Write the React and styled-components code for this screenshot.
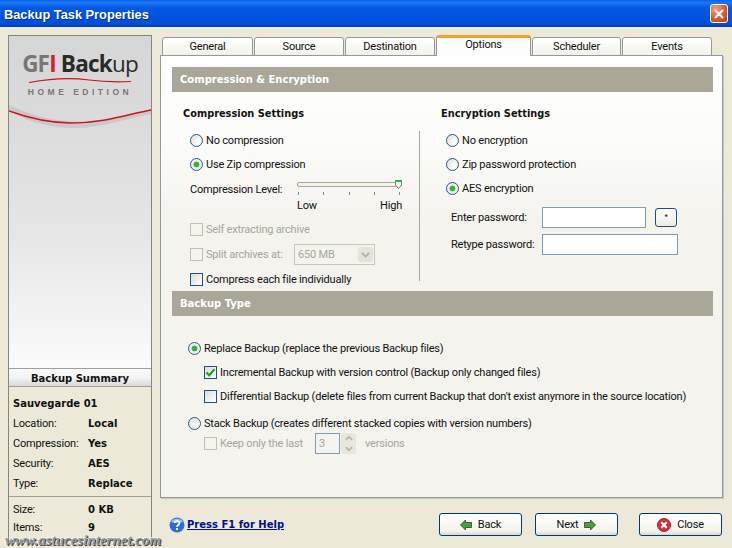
import React from "react";
import styled, { createGlobalStyle } from "styled-components";

const Global = createGlobalStyle`
  html, body { margin: 0; padding: 0; background: #ece9d8; }
  * { box-sizing: border-box; }
`;

const Win = styled.div`
  position: relative;
  width: 732px;
  height: 548px;
  overflow: hidden;
  background: #ece9d8;
  font-family: "Roboto", "Liberation Sans", sans-serif;
  font-size: 11px;
  letter-spacing: -0.2px;
  color: #111;
  display: flex;
  flex-direction: column;
`;
const TitleBar = styled.div`
  height: 27px;
  flex: none;
  display: flex;
  align-items: center;
  justify-content: space-between;
  padding: 0 4px 0 4px;
  background: linear-gradient(180deg, #0a5fe8 0%, #1a78f6 10%, #0558e2 28%, #0054e3 60%, #0050d8 85%, #0040b8 100%);
`;
const TitleText = styled.div`
  font-family: "Liberation Sans", sans-serif;
  font-weight: 700;
  font-size: 12.8px;
  letter-spacing: 0;
  padding-top: 2px;
  color: #fff;
  text-shadow: 1px 1px 0 #0a2e8a;
`;
const CloseX = styled.div`
  width: 18px;
  height: 19px;
  border: 1px solid #fff;
  border-radius: 3px;
  background: radial-gradient(circle at 30% 25%, #f0a080, #dc5a30 55%, #c03a18);
  display: flex;
  align-items: center;
  justify-content: center;
`;
const Main = styled.div`
  flex: 1;
  min-height: 0;
  display: flex;
  padding: 8px 9px 0 8px;
  gap: 8px;
`;
const Side = styled.div`
  width: 144px;
  flex: none;
  height: 506px;
  border: 1px solid #85857d;
  display: flex;
  flex-direction: column;
`;
const LogoArea = styled.div`
  height: 332px;
  flex: none;
  position: relative;
  background: linear-gradient(180deg, #d6d6d6 0%, #dcdcdc 30%, #e6e6e6 60%, #fbfbfb 100%);
  display: flex;
  flex-direction: column;
  align-items: center;
`;
const LogoName = styled.div`
  margin-top: 13px;
  font-family: "Open Sans", "Noto Sans", sans-serif;
  font-weight: 700;
  font-size: 22.5px;
  line-height: 29px;
  letter-spacing: -0.8px;
  color: #2a2a2a;
  white-space: nowrap;
`;
const LogoGray = styled.span`
  color: #777;
`;
const LogoRed = styled.span`
  color: #d8202a;
`;
const LogoLight = styled.span`
  font-weight: 400;
`;
const Swoosh = styled.svg`
  display: block;
  flex: none;
`;
const LogoSub = styled.div`
  font-family: "Liberation Sans", sans-serif;
  font-size: 8.5px;
  font-weight: 700;
  letter-spacing: 3.5px;
  color: #777;
  margin-top: 3px;
  margin-bottom: 7px;
  line-height: 12px;
`;
const SumHead = styled.div`
  height: 19px;
  flex: none;
  padding-top: 1px;
  border-top: 1px solid #a0a098;
  border-bottom: 1px solid #a0a098;
  background: linear-gradient(180deg, #fafafa 0%, #f4f4f4 50%, #d8d8d8 100%);
  display: flex;
  align-items: center;
  justify-content: center;
  font-family: "DejaVu Sans", sans-serif;
  font-size: 10px;
  letter-spacing: 0;
  font-weight: 700;
`;
const SumName = styled.div`
  height: 19px;
  margin-top: 7px;
  padding-left: 4px;
  line-height: 20px;
  font-family: "DejaVu Sans", sans-serif;
  font-weight: 700;
  font-size: 10px;
  letter-spacing: 0;
`;
const SumRow = styled.div`
  height: ${p => p.$h || 20}px;
  display: flex;
  align-items: center;
  padding-left: 4px;
`;
const SumKey = styled.span`
  width: 75px;
  flex: none;
`;
const SumVal = styled.span`
  font-family: "DejaVu Sans", sans-serif;
  font-weight: 700;
  font-size: 10px;
  letter-spacing: 0;
`;
const SumRule = styled.div`
  height: 1px;
  background: #a0a098;
  margin: 3px 0 3px;
`;
const Right = styled.div`
  flex: 1;
  min-width: 0;
  display: flex;
  flex-direction: column;
`;
const Tabs = styled.div`
  height: 21px;
  flex: none;
  display: flex;
  align-items: flex-end;
  padding-left: 2px;
  gap: 1px;
  margin-bottom: -1px;
  position: relative;
  z-index: 1;
`;
const Tab = styled.div`
  width: ${p => p.$w}px;
  height: ${p => (p.$active ? 21 : 19)}px;
  border: 1px solid #919b9c;
  border-bottom: ${p => (p.$active ? "none" : "1px solid #919b9c")};
  border-radius: 3px 3px 0 0;
  border-top: ${p => (p.$active ? "3px solid #f2a32c" : "1px solid #919b9c")};
  background: ${p => (p.$active ? "#fdfdfb" : "linear-gradient(180deg,#fff,#f3f2ea)")};
  display: flex;
  align-items: center;
  justify-content: center;
  padding-bottom: ${p => (p.$active ? 5 : 0)}px;
`;
const Panel = styled.div`
  height: 443px;
  flex: none;
  border: 1px solid #919b9c;
  box-shadow: 1px 1px 0 #c8c6b8;
  background: linear-gradient(180deg, #ffffff 0%, #fbfbf9 20%, #f4f3ee 38%, #f4f3ee 100%);
  padding: 11px 9px 0 11px;
  display: flex;
  flex-direction: column;
`;
const SecHead = styled.div`
  height: 25px;
  flex: none;
  background: #aaa798;
  color: #fff;
  display: flex;
  align-items: center;
  padding-left: 8px;
  font-family: "DejaVu Sans", sans-serif;
  font-weight: 700;
  font-size: 10px;
  letter-spacing: 0;
`;
const Columns = styled.div`
  height: 199px;
  flex: none;
  display: flex;
`;
const Col = styled.div`
  width: ${p => p.$w}px;
  flex: none;
  padding-top: 14px;
  padding-left: ${p => p.$pl}px;
`;
const Divider = styled.div`
  width: 1px;
  height: 150px;
  margin-top: 39px;
  background: #a8a79c;
  flex: none;
`;
const ColTitle = styled.div`
  height: 16px;
  line-height: 16px;
  margin-bottom: 6px;
  font-family: "DejaVu Sans", sans-serif;
  font-weight: 700;
  font-size: 9.8px;
  letter-spacing: 0;
`;
const Row = styled.div`
  height: ${p => p.$h || 24}px;
  margin-top: ${p => p.$mt || 0}px;
  display: flex;
  align-items: center;
  padding-left: ${p => p.$indent || 0}px;
  color: ${p => (p.$off ? "#a6a69c" : "inherit")};
  white-space: nowrap;
`;
const LevelRow = styled(Row)`
  align-items: flex-start;
`;
const Radio = styled.span`
  width: 13px;
  height: 13px;
  flex: none;
  margin-right: 3px;
  border-radius: 50%;
  border: 1px solid #2d5a86;
  background: ${p =>
    p.$on
      ? "radial-gradient(circle, #2fb53a 0 2.5px, #e8e8e0 3.2px, #fff 100%)"
      : "radial-gradient(circle at 65% 65%, #fff, #dcdcd2)"};
`;
const Check = styled.span`
  width: 13px;
  height: 13px;
  flex: none;
  margin-right: 3px;
  border: 1px solid ${p => (p.$off ? "#c0bfb4" : "#1c5180")};
  background: ${p => (p.$off ? "#f4f3ee" : "linear-gradient(135deg,#dcdcd4,#fff)")};
  display: flex;
  align-items: center;
  justify-content: center;
`;
const LevelLabel = styled.span`
  width: 107px;
  flex: none;
  margin-top: 7px;
`;
const FixedLabel = styled.span`
  width: ${p => p.$w}px;
  flex: none;
`;
const SliderBox = styled.div`
  width: 105px;
  height: 34px;
  position: relative;
  flex: none;
  margin-top: 5px;
`;
const Track = styled.div`
  height: 5px;
  margin-top: 1px;
  border: 1px solid #a5a59a;
  border-radius: 2px;
  background: #f6f5ec;
`;
const Ticks = styled.div`
  display: flex;
  justify-content: space-between;
  margin-top: 5px;
  padding: 0 2px 0 1px;
`;
const TickMark = styled.i`
  width: 1px;
  height: 3px;
  background: #888;
`;
const Scale = styled.div`
  display: flex;
  justify-content: space-between;
  margin-top: 4px;
  line-height: 13px;
`;
const Thumb = styled.svg`
  position: absolute;
  right: 0;
  top: -1px;
`;
const Combo = styled.div`
  width: 81px;
  height: 21px;
  border: 1px solid #c8c7bc;
  display: flex;
  align-items: center;
  justify-content: space-between;
  padding: 2px 1px 2px 3px;
  background: #f4f3ee;
`;
const ComboArrow = styled.span`
  width: 15px;
  height: 100%;
  background: #e4e3da;
  border-radius: 2px;
  display: flex;
  align-items: center;
  justify-content: center;
`;
const PassRow = styled.div`
  display: flex;
  align-items: center;
  height: ${p => p.$h}px;
  padding-left: ${p => p.$pl || 10}px;
  padding-top: ${p => p.$pt || 0}px;
  white-space: nowrap;
`;
const PassLabel = styled.span`
  width: 91px;
  flex: none;
`;
const TextBox = styled.div`
  width: ${p => p.$w}px;
  height: 21px;
  flex: none;
  border: 1px solid #7f9db9;
  background: #fff;
`;
const StarBtn = styled.div`
  width: 22px;
  height: 19px;
  margin-left: 9px;
  border: 1px solid #1c4f7c;
  border-radius: 3px;
  background: linear-gradient(180deg, #fff, #ecebe2);
  display: flex;
  align-items: center;
  justify-content: center;
  line-height: 1;
  font-size: 8px;
`;
const TypeBody = styled.div`
  padding: 20px 0 0 16px;
`;
const SpinBox = styled.div`
  width: 25px;
  height: 21px;
  border: 1px solid #7f9db9;
  padding-left: 3px;
  line-height: 19px;
  flex: none;
`;
const SpinBtns = styled.div`
  width: 15px;
  height: 21px;
  margin-left: 1px;
  margin-right: 9px;
  background: #e8e7de;
  border-radius: 2px;
  display: flex;
  flex-direction: column;
  align-items: center;
  justify-content: space-around;
  flex: none;
`;
const Footer = styled.div`
  flex: 1;
  display: flex;
  align-items: center;
  padding-left: 9px;
  padding-top: 3px;
`;
const HelpLink = styled.a`
  display: flex;
  align-items: center;
  gap: 2px;
  color: #00108a;
  font-family: "DejaVu Sans", sans-serif;
  font-size: 10px;
  letter-spacing: 0;
  font-weight: 700;
  text-decoration: underline;
  width: 270px;
  flex: none;
`;
const Btn = styled.div`
  width: 83px;
  height: 23px;
  flex: none;
  margin-left: ${p => p.$ml || 0}px;
  border: 1px solid #003c74;
  border-radius: 3px;
  background: linear-gradient(180deg, #fff 0%, #f5f4ee 80%, #dcd8cc 100%);
  display: flex;
  align-items: center;
  justify-content: center;
  gap: 6px;
`;
const Watermark = styled.div`
  position: absolute;
  left: 5px;
  bottom: 1px;
  font-family: "Liberation Serif", serif;
  font-style: italic;
  font-weight: 700;
  font-size: 15px;
  letter-spacing: 0;
  line-height: 13px;
  color: #9a9a9a;
  text-shadow: 1px 1px 0 #444, -1px -1px 0 #f4f4f4;
`;

const Arrow = ({ dir }) => (
  <svg width="12" height="12" viewBox="0 0 12 12">
    <path
      d={dir === "left" ? "M0.5 6 L5.5 1 V3.5 H11.5 V8.5 H5.5 V11 Z" : "M11.5 6 L6.5 1 V3.5 H0.5 V8.5 H6.5 V11 Z"}
      fill="#3fa53a"
      stroke="#4a5a3a"
      strokeWidth="1"
    />
  </svg>
);
const Tick = () => (
  <svg width="11" height="11" viewBox="0 0 11 11">
    <path d="M1.5 5.5 L4.2 8.3 L9.5 2.2" fill="none" stroke="#21a121" strokeWidth="2.2" />
  </svg>
);
const Chevron = ({ up, color = "#b5b4a8", size = 9 }) => (
  <svg width={size} height="6" viewBox="0 0 9 6">
    <path d={up ? "M1 5 L4.5 1.5 L8 5" : "M1 1 L4.5 4.5 L8 1"} fill="none" stroke={color} strokeWidth="2" />
  </svg>
);

const tabs = [
  ["General", 91], ["Source", 90], ["Destination", 90], ["Options", 95], ["Scheduler", 89], ["Events", 90],
];
const sum = [["Location:", "Local"], ["Compression:", "Yes"], ["Security:", "AES"], ["Type:", "Replace"]];

export default function App() {
  return (
    <Win>
      <Global />
      <TitleBar>
        <TitleText>Backup Task Properties</TitleText>
        <CloseX>
          <svg width="12" height="12" viewBox="0 0 12 12">
            <path d="M2 2 L10 10 M10 2 L2 10" stroke="#fff" strokeWidth="2.2" />
          </svg>
        </CloseX>
      </TitleBar>
      <Main>
        <Side>
          <LogoArea>
            <LogoName>
              <LogoGray>GF</LogoGray><LogoRed>I</LogoRed> Back<LogoLight>up</LogoLight>
            </LogoName>
            <Swoosh width="102" height="5" viewBox="0 0 102 5">
              <path d="M0 4.5 C25 0 45 0 60 2 C75 4 90 4 102 3.5" fill="none" stroke="#c8141c" strokeWidth="1.2" />
            </Swoosh>
            <LogoSub>HOME EDITION</LogoSub>
            <Swoosh width="142" height="26" viewBox="0 0 142 26">
              <path d="M0 0 C30 14 55 18 80 16 C105 14 125 8 142 4 L142 9 C115 14 90 24 60 23 C35 22 15 14 0 6 Z" fill="#bcbcbc" opacity="0.6" />
              <path d="M0 6 C22 14 42 18 62 18 C95 18 120 9 142 5" fill="none" stroke="#d4101c" strokeWidth="1.5" />
            </Swoosh>
          </LogoArea>
          <SumHead>Backup Summary</SumHead>
          <SumName>Sauvegarde 01</SumName>
          {sum.map(([k, v]) => (
            <SumRow key={k}>
              <SumKey>{k}</SumKey>
              <SumVal>{v}</SumVal>
            </SumRow>
          ))}
          <SumRule />
          <SumRow $h={18}><SumKey>Size:</SumKey><SumVal>0 KB</SumVal></SumRow>
          <SumRow $h={18}><SumKey>Items:</SumKey><SumVal>9</SumVal></SumRow>
        </Side>
        <Right>
          <Tabs>
            {tabs.map(([t, w]) => (
              <Tab key={t} $w={w} $active={t === "Options"}>{t}</Tab>
            ))}
          </Tabs>
          <Panel>
            <SecHead>Compression &amp; Encryption</SecHead>
            <Columns>
              <Col $w={247} $pl={11}>
                <ColTitle>Compression Settings</ColTitle>
                <Row $indent={7}><Radio />No compression</Row>
                <Row $indent={7}><Radio $on />Use Zip compression</Row>
                <LevelRow $h={41} $indent={7}>
                  <LevelLabel>Compression Level:</LevelLabel>
                  <SliderBox>
                    <Track />
                    <Thumb width="7" height="9" viewBox="0 0 7 9">
                      <path d="M0.5 0.5 H6.5 V5 L3.5 8.5 L0.5 5 Z" fill="#fff" stroke="#6a8a6a" />
                      <rect x="0" y="0" width="7" height="2" fill="#30b040" />
                    </Thumb>
                    <Ticks>
                      {[0, 1, 2, 3, 4].map(i => <TickMark key={i} />)}
                    </Ticks>
                    <Scale><span>Low</span><span>High</span></Scale>
                  </SliderBox>
                </LevelRow>
                <Row $h={25} $indent={7} $off><Check $off />Self extracting archive</Row>
                <Row $h={25} $indent={7} $off>
                  <Check $off /><FixedLabel $w={88}>Split archives at:</FixedLabel>
                  <Combo>650 MB<ComboArrow><Chevron /></ComboArrow></Combo>
                </Row>
                <Row $h={25} $indent={7}><Check />Compress each file individually</Row>
              </Col>
              <Divider />
              <Col $w={280} $pl={21}>
                <ColTitle>Encryption Settings</ColTitle>
                <Row $indent={5}><Radio />No encryption</Row>
                <Row $indent={5}><Radio />Zip password protection</Row>
                <Row $indent={5}><Radio $on />AES encryption</Row>
                <PassRow $h={32} $pt={2}>
                  <PassLabel>Enter password:</PassLabel>
                  <TextBox $w={104} />
                  <StarBtn>*</StarBtn>
                </PassRow>
                <PassRow $h={24}>
                  <PassLabel>Retype password:</PassLabel>
                  <TextBox $w={136} />
                </PassRow>
              </Col>
            </Columns>
            <SecHead>Backup Type</SecHead>
            <TypeBody>
              <Row><Radio $on />Replace Backup (replace the previous Backup files)</Row>
              <Row $indent={16}><Check><Tick /></Check>Incremental Backup with version control (Backup only changed files)</Row>
              <Row $indent={16}><Check />Differential Backup (delete files from current Backup that don't exist anymore in the source location)</Row>
              <Row $h={20} $mt={5}><Radio />Stack Backup (creates different stacked copies with version numbers)</Row>
              <Row $h={21} $indent={16} $off>
                <Check $off /><FixedLabel $w={95}>Keep only the last</FixedLabel>
                <SpinBox>3</SpinBox>
                <SpinBtns><Chevron up size={8} /><Chevron size={8} /></SpinBtns>
                versions
              </Row>
            </TypeBody>
          </Panel>
          <Footer>
            <HelpLink>
              <svg width="16" height="16" viewBox="0 0 16 16">
                <circle cx="8" cy="8" r="7.5" fill="#2a6fd8" />
                <path d="M2 5 A7 7 0 0 1 14 5 A12 6 0 0 1 2 5Z" fill="#8fc0f4" />
                <path d="M5.8 6 C5.8 3.4 10.4 3.4 10.4 6 C10.4 8 8 7.8 8 9.8" fill="none" stroke="#fff" strokeWidth="1.9" />
                <rect x="7" y="11" width="2" height="2" fill="#fff" />
              </svg>
              Press F1 for Help
            </HelpLink>
            <Btn><Arrow dir="left" />Back</Btn>
            <Btn $ml={13}>Next<Arrow dir="right" /></Btn>
            <Btn $ml={21}>
              <svg width="14" height="14" viewBox="0 0 14 14">
                <circle cx="7" cy="7" r="6.5" fill="#d8303a" stroke="#a02030" />
                <path d="M4.3 4.3 L9.7 9.7 M9.7 4.3 L4.3 9.7" stroke="#fff" strokeWidth="2.2" />
              </svg>
              Close
            </Btn>
          </Footer>
        </Right>
      </Main>
      <Watermark>www.astucesinternet.com</Watermark>
    </Win>
  );
}
